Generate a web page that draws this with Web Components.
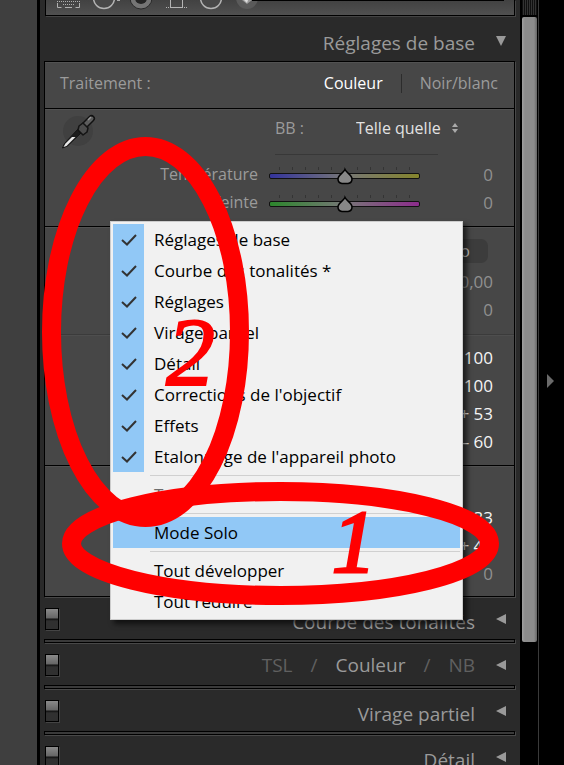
<!DOCTYPE html>
<html lang="fr">
<head>
<meta charset="utf-8">
<title>Réglages de base</title>
<style>
  body {
    margin: 0;
    background: #000;
    color: #9b9b9b;
    font-family: "Open Sans", "Noto Sans", sans-serif;
    font-size: 17px;
  }
</style>
</head>
<body>
<develop-app></develop-app>

<script>
class DevelopApp extends HTMLElement {
  constructor() {
    super();
    this.attachShadow({ mode: 'open' });
    this.shadowRoot.innerHTML = `
      <style>
        :host {
          display: grid;
          grid-template-columns: 37px 1fr 18px 26px;
          grid-template-rows: 100vh;
          position: relative;
          overflow: hidden;
        }
        .canvas { background: #3f3f3f; }
        .panel {
          background: #2a2a2a;
          border-left: 3px solid #000;
          padding: 0 5px 0 4px;
          min-width: 0;
          font-size: 16px;
        }
        .scroll { padding: 0 1px 0 2px; }
        .grip {
          height: 15px;
          margin-bottom: 2px;
          background: repeating-linear-gradient(90deg, #101010 0 1px, #333 1px 2px);
        }
        .thumb {
          height: 625px;
          border-radius: 2px;
          background: linear-gradient(90deg, #a0a0a0, #8c8c8c 20%, #8c8c8c 80%, #666);
        }
        .edge {
          display: flex;
          align-items: center;
          border-left: 1px solid #3a3a3a;
          padding: 0 0 4px 8px;
        }
        .box {
          border: 1px solid #000;
          box-shadow: 1px 1px 0 #484848;
          background: #474747;
        }
        .section {
          display: flex;
          flex-direction: column;
          box-sizing: border-box;
          border-top: 1px solid #000;
          box-shadow: inset 0 1px 0 #525252;
        }
        .section:first-child { border-top: none; }
        .treatment {
          flex-direction: row;
          align-items: center;
          height: 46px;
          padding: 0 16px 4px 15px;
        }
        .treatment span { flex: 1; }
        .treatment i {
          width: 1px;
          height: 19px;
          margin: 0 18px;
          background: #2c2c2c;
        }
        .treatment button, .auto, .wb select {
          border: none;
          padding: 0;
          background: none;
          color: inherit;
          font: inherit;
        }
        .treatment .on { color: #fff; }
        .balance { height: 118px; }
        .wb {
          display: flex;
          align-items: center;
          height: 37px;
          padding: 0 56px 0 16px;
        }
        .wb svg { flex: none; }
        .wb .picker {
          align-self: flex-start;
          margin-right: auto;
        }
        .wb label { margin-right: 52px; }
        .wb select {
          appearance: none;
          width: 90px;
          margin-right: 6px;
          color: #e2e2e2;
        }
        .rule {
          width: 163px;
          height: 1px;
          margin: 8px 76px 7px auto;
          background: #383838;
        }
        .tone { height: 239px; padding-top: 12px; }
        .auto {
          align-self: flex-end;
          width: 76px;
          height: 24px;
          margin: 0 26px 6px 0;
          padding-right: 18px;
          border-radius: 7px;
          background: #3c3c3c;
          color: #c8c8c8;
          line-height: 24px;
          text-align: right;
        }
        .split {
          height: 1px;
          margin: 9px 0 10px;
          background: #3b3b3b;
          box-shadow: 0 1px 0 #4e4e4e;
        }
        .presence { height: 131px; padding-top: 39px; }
        panel-menu {
          position: absolute;
          left: 110px;
          top: 221px;
        }
        red-marks {
          position: absolute;
          inset: 0;
        }
      </style>
      <div class="canvas"></div>
      <main class="panel">
        <tool-strip></tool-strip>
        <panel-header open>Réglages de base</panel-header>
        <div class="box">
          <div class="section treatment">
            <span>Traitement :</span>
            <button class="on">Couleur</button><i></i><button>Noir/blanc</button>
          </div>
          <div class="section balance">
            <div class="wb">
              <svg class="picker" width="36" height="40" viewBox="0 0 36 40">
                <circle cx="17" cy="22" r="15" fill="#404040"/>
                <path d="M1.500 39l2-4.500L17 20l3.500 3.500L6.500 37z" fill="#1c1c1c" stroke="#151515"/>
                <path d="M2.500 38l2-3.500 6.500-6.500 3.500 0-9 9z" fill="#e8e8e8"/>
                <path d="M24 16l6.500-6.500" stroke="#111" stroke-width="7" stroke-linecap="round"/>
                <path d="M24 16l6.500-6.500" stroke="#5c5c5c" stroke-width="4" stroke-linecap="round"/>
                <path d="M27 11l3-3" stroke="#999" stroke-width="1.500"/>
                <path d="M18 17l4-3 5 5-1 4-4 3-5-5z" fill="#4c4c4c" stroke="#141414" stroke-width="1.500" stroke-linejoin="round"/>
              </svg>
              <label for="wb">BB :</label>
              <select id="wb"><option>Telle quelle</option></select>
              <svg width="6" height="10" viewBox="0 0 6 10" fill="#aaa"><path d="M3 0l3 4H0zM3 10l3-4H0z"/></svg>
            </div>
            <div class="rule"></div>
            <slider-row label="Température" value="0" from="#34349c" to="#85852c"></slider-row>
            <slider-row label="Teinte" value="0" from="#2c862c" to="#8c2c8c"></slider-row>
          </div>
          <div class="section tone">
            <button class="auto">Auto</button>
            <slider-row value="0,00"></slider-row>
            <slider-row value="0"></slider-row>
            <div class="split"></div>
            <slider-row value="100" set></slider-row>
            <slider-row value="100" set></slider-row>
            <slider-row value="+ 53" set></slider-row>
            <slider-row value="– 60" set></slider-row>
          </div>
          <div class="section presence">
            <slider-row value="33" set></slider-row>
            <slider-row value="+ 46" set></slider-row>
            <slider-row value="0"></slider-row>
          </div>
        </div>
        <panel-header toggle>Courbe des tonalités</panel-header>
        <panel-header toggle><mode-tabs></mode-tabs></panel-header>
        <panel-header toggle>Virage partiel</panel-header>
        <panel-header toggle>Détail</panel-header>
      </main>
      <div class="scroll"><div class="grip"></div><div class="thumb"></div></div>
      <div class="edge"><svg width="8" height="14" viewBox="0 0 8 14"><path d="M0 0l7 7-7 7z" fill="#6a6a6a"/></svg></div>
      <panel-menu></panel-menu>
      <red-marks></red-marks>
    `;
  }
}

class ToolStrip extends HTMLElement {
  constructor() {
    super();
    this.attachShadow({ mode: 'open' });
    this.shadowRoot.innerHTML = `
      <style>
        :host {
          display: flex;
          box-sizing: border-box;
          height: 16px;
          margin-left: 1px;
          padding: 0 10px 0 4px;
          border: 1px solid #000;
          border-top: none;
          background: linear-gradient(#424242, #505050);
          box-shadow: 1px 1px 0 #444;
        }
        svg { flex: none; }
        .line {
          flex: 1;
          height: 1px;
          margin-left: -14px;
          background: #000;
        }
      </style>
      <svg width="36" height="14" fill="none" stroke="#b0b0b0">
        <path d="M7.500 3v4.500h4M29.500 3v4.500h-4M15 7.500h7"/><path d="M7 1.500h24M13 4.500h12" stroke-dasharray="1 1"/>
      </svg>
      <svg width="36" height="14"><circle cx="18" cy="-2" r="10.500" fill="#484848" stroke="#b4b4b4" stroke-width="1.500"/><path d="M31 .5h3" stroke="#aaa"/></svg>
      <svg width="36" height="14"><circle cx="19" cy="-2" r="11" fill="#757575" stroke="#2a2a2a"/><circle cx="19" cy="-2" r="6" fill="#252525"/></svg>
      <svg width="36" height="14" fill="none" stroke="#b4b4b4"><path d="M12.500 0v7.500h12V0"/><path d="M8 7.500h21" stroke-dasharray="1 1"/></svg>
      <svg width="36" height="14"><circle cx="17" cy="-2" r="10.500" fill="#484848" stroke="#b4b4b4" stroke-width="1.500"/></svg>
      <svg width="36" height="14"><circle cx="17" cy="-2" r="11" fill="#5a5a5a"/><path d="M12 0h10l-5 4z" fill="#999"/><path d="M14 0h4l-1 3z" fill="#ddd"/></svg>
      <div class="line"></div>
    `;
  }
}

class PanelHeader extends HTMLElement {
  constructor() {
    super();
    this.attachShadow({ mode: 'open' });
    const arrow = this.hasAttribute('open') ? 'M0 1h10L5 11z' : 'M10 0v10L0 5z';
    const toggle = this.hasAttribute('toggle') ? '<button class="toggle" aria-label="Activer"></button>' : '';
    this.shadowRoot.innerHTML = `
      <style>
        :host {
          display: block;
          font-size: 19px;
          color: #9a9a9a;
        }
        .row {
          display: flex;
          align-items: center;
          box-sizing: border-box;
          height: 42px;
          padding: 2px 8px 0 1px;
        }
        :host([open]) .row { height: 45px; padding-top: 4px; }
        .bar {
          height: 2px;
          border: 1px solid #000;
          background: #3a3a3a;
          box-shadow: 1px 1px 0 #484848;
        }
        :host([open]) .bar { display: none; }
        .toggle {
          width: 14px;
          height: 22px;
          padding: 0;
          border: 1px solid #000;
          box-shadow: 1px 1px 0 #444;
          background: linear-gradient(#8a8a8a, #666 45%, #111 50%, #303030 60%);
        }
        .title {
          flex: 1;
          padding-top: 5px;
          margin-right: 21px;
          line-height: 26px;
          text-align: right;
        }
        svg { margin-right: 1px; }
      </style>
      <div class="row">
        ${toggle}
        <div class="title"><slot></slot></div>
        <svg width="10" height="11" viewBox="0 0 10 11"><path d="${arrow}" fill="#999"/></svg>
      </div>
      <div class="bar"></div>
    `;
  }
}

class ModeTabs extends HTMLElement {
  constructor() {
    super();
    this.attachShadow({ mode: 'open' });
    this.shadowRoot.innerHTML = `
      <style>
        :host {
          display: flex;
          justify-content: flex-end;
          gap: 18px;
          padding-bottom: 6px;
          color: #606060;
        }
        a { color: inherit; text-decoration: none; }
        .on { color: #9a9a9a; }
      </style>
      <a href="#tsl">TSL</a><span>/</span><a class="on" href="#couleur">Couleur</a><span>/</span><a href="#nb">NB</a>
    `;
  }
}

class SliderRow extends HTMLElement {
  constructor() {
    super();
    this.attachShadow({ mode: 'open' });
    const label = this.getAttribute('label');
    const value = this.getAttribute('value');
    // rows without a label only show their value
    const control = label ? `
      <label for="range">${label}</label>
      <input id="range" type="range" min="-100" max="100" value="0">` : '';
    this.shadowRoot.innerHTML = `
      <style>
        :host {
          display: flex;
          align-items: center;
          justify-content: flex-end;
          height: 28px;
          padding-right: 21px;
          --from: ${this.getAttribute('from')};
          --to: ${this.getAttribute('to')};
        }
        label {
          margin-right: 11px;
          padding-bottom: 4px;
        }
        input {
          appearance: none;
          width: 151px;
          height: 18px;
          margin: 0;
          background:
            repeating-linear-gradient(90deg, #343434 0 1px, transparent 1px 13px) 10px 0 / 132px 3px no-repeat;
        }
        input::-webkit-slider-runnable-track {
          box-sizing: border-box;
          height: 6px;
          border: 1px solid #111;
          border-radius: 2px;
          background: linear-gradient(90deg, var(--from), #777 50%, var(--to));
        }
        input::-webkit-slider-thumb {
          appearance: none;
          width: 16px;
          height: 17px;
          margin-top: -6px;
          background: url('data:image/svg+xml,<svg xmlns="http://www.w3.org/2000/svg" width="16" height="17"><path d="M8 1.500C9.500 5 15 7 15 11q0 4-4 4.500H5Q1 15 1 11C1 7 6.500 5 8 1.500z" fill="rgb(135,135,135)" stroke="black" stroke-width="1.500"/></svg>') no-repeat;
        }
        output {
          width: 73px;
          padding-bottom: 4px;
          text-align: right;
          font-size: 17px;
          color: #909090;
        }
        :host([set]) output { color: #f4f4f4; }
      </style>
      ${control}
      <output>${value}</output>
    `;
  }
}

class PanelMenu extends HTMLElement {
  constructor() {
    super();
    this.attachShadow({ mode: 'open' });
    const panels = ['Réglages de base', 'Courbe des tonalités *', 'Réglages', 'Virage partiel',
      'Détail', "Corrections de l'objectif", 'Effets', "Etalonnage de l'appareil photo"];
    const check = '<svg width="16" height="12" viewBox="0 0 16 12"><path d="M1 6l5 4.500L15 1" fill="none" stroke="#333" stroke-width="2"/></svg>';
    const checked = panels.map(name => `
      <button role="menuitemcheckbox" aria-checked="true"><i>${check}</i>${name}</button>`).join('');
    this.shadowRoot.innerHTML = `
      <style>
        :host {
          display: block;
          box-sizing: border-box;
          width: 353px;
          padding: 2px;
          border: 1px solid #ccc;
          background: #f1f1f1;
          box-shadow: 4px 4px 5px rgba(0, 0, 0, 0.6);
        }
        button {
          display: flex;
          align-items: center;
          gap: 10px;
          width: 100%;
          height: 31px;
          padding: 0;
          border: none;
          background: none;
          color: #000;
          font: inherit;
          white-space: nowrap;
        }
        i {
          display: grid;
          place-content: center;
          width: 31px;
          height: 31px;
        }
        [aria-checked] i, .active { background: #91c8f6; }
        button:disabled { color: #6d6d6d; }
        hr {
          height: 1px;
          margin: 3px 0 3px 37px;
          border: none;
          background: #d0d0d0;
        }
      </style>
      <div role="menu">
        ${checked}
        <hr>
        <button role="menuitem" disabled><i></i>Tout afficher</button>
        <hr>
        <button role="menuitem" class="active"><i></i>Mode Solo</button>
        <hr>
        <button role="menuitem"><i></i>Tout développer</button>
        <button role="menuitem"><i></i>Tout réduire</button>
      </div>
    `;
  }
}

class RedMarks extends HTMLElement {
  constructor() {
    super();
    this.attachShadow({ mode: 'open' });
    this.shadowRoot.innerHTML = `
      <style>
        :host {
          display: block;
          pointer-events: none;
          color: #f00;
        }
        svg { display: block; }
        span {
          position: absolute;
          font: italic 98px/98px "Liberation Serif", serif;
          -webkit-text-stroke: 2px #f00;
        }
        .two { left: 166px; top: 303px; }
        .one {
          left: 332px;
          top: 498px;
          font-size: 88px;
          line-height: 88px;
          -webkit-text-stroke-width: 3px;
        }
      </style>
      <svg width="100%" height="100%" fill="none" stroke="#f00" stroke-width="19">
        <ellipse cx="145.500" cy="332" rx="94" ry="185.500"/>
        <ellipse cx="280.500" cy="543.500" rx="209" ry="52"/>
      </svg>
      <span class="two">2</span>
      <span class="one">1</span>
    `;
  }
}

customElements.define('tool-strip', ToolStrip);
customElements.define('panel-header', PanelHeader);
customElements.define('mode-tabs', ModeTabs);
customElements.define('slider-row', SliderRow);
customElements.define('panel-menu', PanelMenu);
customElements.define('red-marks', RedMarks);
customElements.define('develop-app', DevelopApp);
</script>
</body>
</html>
